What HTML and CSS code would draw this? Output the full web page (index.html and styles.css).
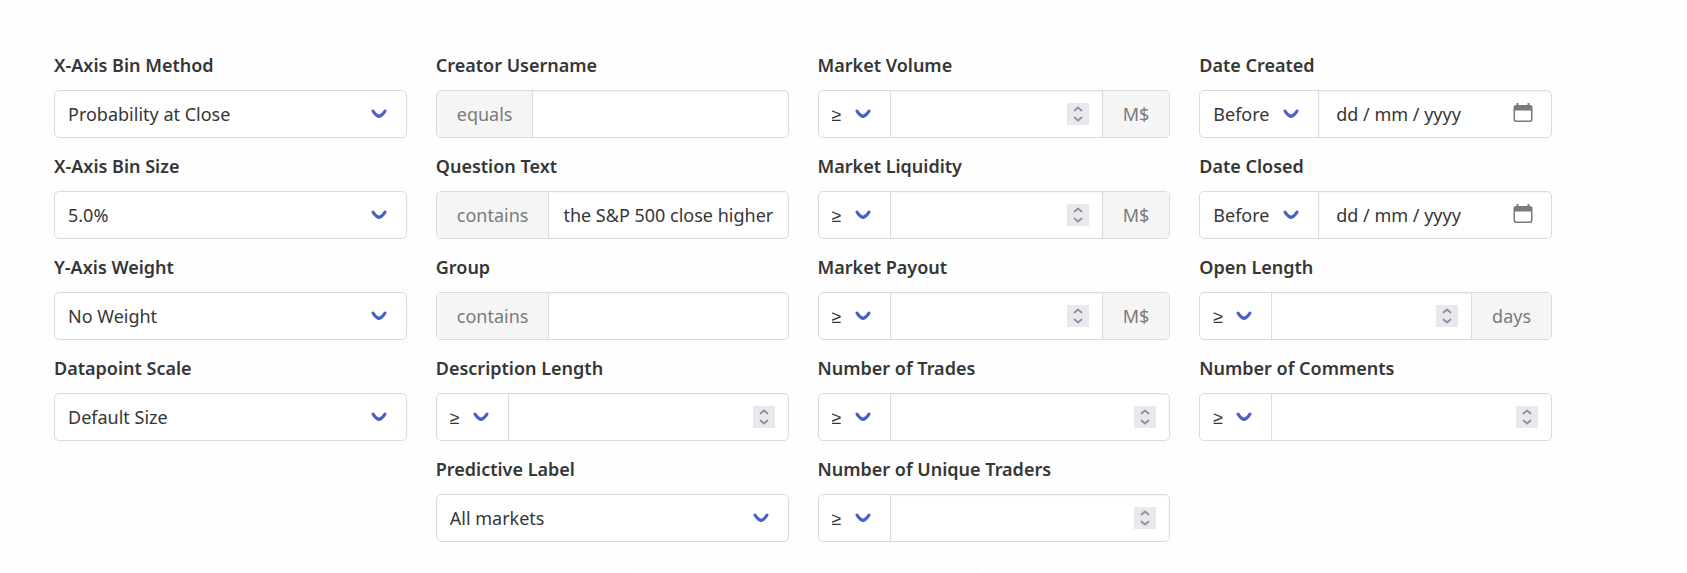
FILE: index.html
```
<!DOCTYPE html>
<html lang="en">
<head>
<meta charset="utf-8">
<title>Chart options</title>
<link rel="stylesheet" href="styles.css">
</head>
<body>
<svg class="symbols" aria-hidden="true">
  <symbol id="calendar" viewBox="0 0 20 20">
    <path fill="currentColor" d="M3.500 0h2v2h9V0h2v2A2.500 2.500 0 0 1 19.500 4.500v12a2.500 2.500 0 0 1-2.500 2.500H3a2.500 2.500 0 0 1-2.500-2.500v-12A2.500 2.500 0 0 1 3.500 2zM2 7.500V16a1.500 1.500 0 0 0 1.500 1.500h13A1.500 1.500 0 0 0 18 16V7.500z"/>
  </symbol>
</svg>
<main class="page">
  <form class="columns">
    <div class="column">
      <div class="field">
        <label class="label" for="bin-method">X-Axis Bin Method</label>
        <div class="control"><select class="select wide" id="bin-method"><option>Probability at Close</option></select></div>
      </div>
      <div class="field">
        <label class="label" for="bin-size">X-Axis Bin Size</label>
        <div class="control"><select class="select wide" id="bin-size"><option>5.0%</option></select></div>
      </div>
      <div class="field">
        <label class="label" for="weight">Y-Axis Weight</label>
        <div class="control"><select class="select wide" id="weight"><option>No Weight</option></select></div>
      </div>
      <div class="field">
        <label class="label" for="scale">Datapoint Scale</label>
        <div class="control"><select class="select wide" id="scale"><option>Default Size</option></select></div>
      </div>
    </div>

    <div class="column">
      <div class="field">
        <label class="label" for="creator">Creator Username</label>
        <div class="control"><span class="addon">equals</span><input class="input" type="text" id="creator"></div>
      </div>
      <div class="field">
        <label class="label" for="question">Question Text</label>
        <div class="control"><span class="addon">contains</span><input class="input" type="text" id="question" value="the S&amp;P 500 close higher"></div>
      </div>
      <div class="field">
        <label class="label" for="group">Group</label>
        <div class="control"><span class="addon">contains</span><input class="input" type="text" id="group"></div>
      </div>
      <div class="field">
        <label class="label" for="description">Description Length</label>
        <div class="control"><select class="select" aria-label="Description length comparison"><option>≥</option></select><input class="input number" type="number" id="description"></div>
      </div>
      <div class="field">
        <label class="label" for="predictive">Predictive Label</label>
        <div class="control"><select class="select wide" id="predictive"><option>All markets</option></select></div>
      </div>
    </div>

    <div class="column">
      <div class="field">
        <label class="label" for="volume">Market Volume</label>
        <div class="control"><select class="select" aria-label="Volume comparison"><option>≥</option></select><input class="input number" type="number" id="volume"><span class="addon">M$</span></div>
      </div>
      <div class="field">
        <label class="label" for="liquidity">Market Liquidity</label>
        <div class="control"><select class="select" aria-label="Liquidity comparison"><option>≥</option></select><input class="input number" type="number" id="liquidity"><span class="addon">M$</span></div>
      </div>
      <div class="field">
        <label class="label" for="payout">Market Payout</label>
        <div class="control"><select class="select" aria-label="Payout comparison"><option>≥</option></select><input class="input number" type="number" id="payout"><span class="addon">M$</span></div>
      </div>
      <div class="field">
        <label class="label" for="trades">Number of Trades</label>
        <div class="control"><select class="select" aria-label="Trades comparison"><option>≥</option></select><input class="input number" type="number" id="trades"></div>
      </div>
      <div class="field">
        <label class="label" for="traders">Number of Unique Traders</label>
        <div class="control"><select class="select" aria-label="Traders comparison"><option>≥</option></select><input class="input number" type="number" id="traders"></div>
      </div>
    </div>

    <div class="column">
      <div class="field">
        <label class="label" for="created">Date Created</label>
        <div class="control"><select class="select" aria-label="Date created comparison"><option>Before</option></select><div class="date"><input class="date-text" type="text" id="created" placeholder="dd / mm / yyyy"><button class="date-button" type="button" aria-label="Pick created date"><svg class="icon"><use href="#calendar"/></svg></button></div></div>
      </div>
      <div class="field">
        <label class="label" for="closed">Date Closed</label>
        <div class="control"><select class="select" aria-label="Date closed comparison"><option>Before</option></select><div class="date"><input class="date-text" type="text" id="closed" placeholder="dd / mm / yyyy"><button class="date-button" type="button" aria-label="Pick closed date"><svg class="icon"><use href="#calendar"/></svg></button></div></div>
      </div>
      <div class="field">
        <label class="label" for="open">Open Length</label>
        <div class="control"><select class="select" aria-label="Open length comparison"><option>≥</option></select><input class="input number" type="number" id="open"><span class="addon">days</span></div>
      </div>
      <div class="field">
        <label class="label" for="comments">Number of Comments</label>
        <div class="control"><select class="select" aria-label="Comments comparison"><option>≥</option></select><input class="input number" type="number" id="comments"></div>
      </div>
    </div>
  </form>
  <section class="card"></section>
</main>
</body>
</html>
```
FILE: styles.css
```
* {
  box-sizing: border-box;
}

body {
  margin: 0;
  background: #fefefe;
  color: #363636;
  font-family: "Noto Sans", sans-serif;
  font-size: 18px;
}

.symbols {
  display: none;
}

.page {
  max-height: 100vh;
  padding: 50px 8% 0 54px;
  overflow: hidden;
}

.columns {
  display: grid;
  grid-template-columns: repeat(4, minmax(0, 1fr));
  gap: 29px;
}

.column {
  display: flex;
  flex-direction: column;
  gap: 13px;
}

.field {
  display: flex;
  flex-direction: column;
  gap: 10px;
}

.label {
  font-weight: 600;
  line-height: 30px;
}

.control {
  display: flex;
  height: 48px;
  border: 1px solid #dbdbdb;
  border-radius: 5px;
  background: #fff;
  overflow: hidden;
}

.select,
.input,
.date-text {
  font: inherit;
  color: inherit;
  border: 0;
  margin: 0;
  outline: 0;
  background-color: transparent;
}

.select {
  appearance: none;
  flex: none;
  padding: 0 48px 0 13px;
  background-image: url("data:image/svg+xml,%3Csvg xmlns='http://www.w3.org/2000/svg' width='16' height='12'%3E%3Cpath d='M2 3Q4.500 7.500 8 8.500Q11.500 7.500 14 3' fill='none' stroke='%23485fc7' stroke-width='3' stroke-linecap='round' stroke-linejoin='round'/%3E%3C/svg%3E");
  background-repeat: no-repeat;
  background-position: right 19px center;
}

.wide {
  flex: 1;
}

.addon {
  display: flex;
  align-items: center;
  padding: 0 20px;
  background: #f5f5f5;
  color: #7a7a7a;
}

.input {
  flex: 1;
  min-width: 0;
  padding: 0 14px;
  box-shadow: inset 0 1px 2px rgba(10, 10, 10, 0.05);
}

.control > * + * {
  border-left: 1px solid #dbdbdb;
}

.number {
  appearance: textfield;
  padding-right: 40px;
  background-image: url("data:image/svg+xml,%3Csvg xmlns='http://www.w3.org/2000/svg' width='22' height='22'%3E%3Cpath fill='%23e9e9ed' d='M0 0h22v22H0z'/%3E%3Cpath d='M7.500 7.500L11 4.500L14.500 7.500M7.500 14.500L11 17.500L14.500 14.500' fill='none' stroke='%238f8f9d' stroke-width='1.800' stroke-linecap='round' stroke-linejoin='round'/%3E%3C/svg%3E");
  background-repeat: no-repeat;
  background-position: right 13px center;
}

.date {
  display: flex;
  flex: 1;
  min-width: 0;
  align-items: center;
  padding: 0 18px 0 17px;
  box-shadow: inset 0 1px 2px rgba(10, 10, 10, 0.05);
}

.date-text {
  flex: 1;
  min-width: 0;
  padding: 0;
}

.date-text::placeholder {
  color: #363636;
  opacity: 1;
}

.date-button {
  display: flex;
  padding: 0 0 2px;
  border: 0;
  background: none;
  color: #7a7a7a;
}

.icon {
  width: 20px;
  height: 20px;
}

.card {
  width: 354px;
  height: 80px;
  margin: 28px auto 0;
  border-radius: 10px;
  background: #fefefe;
  box-shadow: 0 8px 16px -2px rgba(10, 10, 10, 0.1), 0 0 0 1px rgba(10, 10, 10, 0.02);
}
```
